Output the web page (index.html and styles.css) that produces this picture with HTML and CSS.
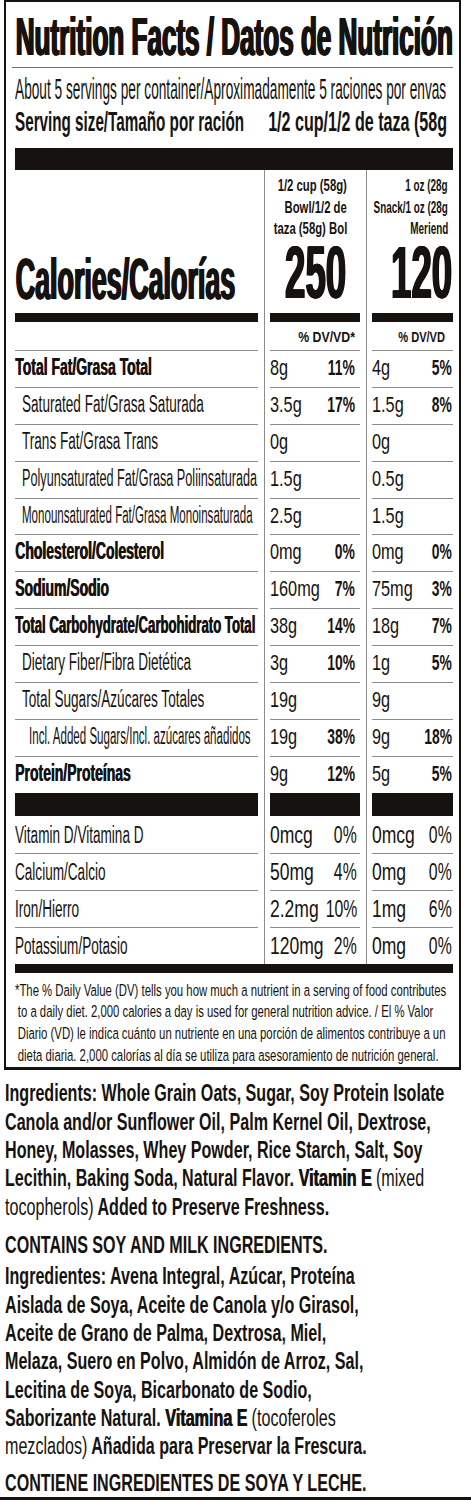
FILE: index.html
```html
<!DOCTYPE html>
<html lang="en">
<head>
    <meta charset="UTF-8">
    <meta name="viewport" content="width=device-width, initial-scale=1.0">
    <title>Nutrition Facts / Datos de Nutrición</title>
    <link rel="stylesheet" href="styles.css">
</head>
<body>
	<div class="label">
		<h1 class="title"><span class="sq heavy">Nutrition Facts / Datos de Nutrición</span></h1>
		<div class="per"><span class="sq">About 5 servings per container/Aproximadamente 5 raciones por envas</span></div>
		<div class="size">
			<span class="sq">Serving size/Tamaño por ración</span>
			<span class="end"><span class="sq">1/2 cup/1/2 de taza (58g</span></span>
		</div>
		<div class="bar-top"></div>

		<div class="facts">
			<div class="cal"><span class="sq heavy">Calories/Calorías</span></div>
			<div class="serv serv-a">
				<div class="end"><span class="sq">1/2 cup (58g)</span></div>
				<div class="end"><span class="sq">Bowl/1/2 de</span></div>
				<div class="end"><span class="sq">taza (58g) Bol</span></div>
				<div class="end big"><span class="sq heavy">250</span></div>
			</div>
			<div class="serv serv-b">
				<div class="end"><span class="sq">1 oz (28g</span></div>
				<div class="end"><span class="sq">Snack/1 oz (28g</span></div>
				<div class="end"><span class="sq">Meriend</span></div>
				<div class="end big"><span class="sq heavy">120</span></div>
			</div>

			<div class="bar"></div><div class="bar"></div><div class="bar"></div>

			<div class="dv"></div>
			<div class="dv end dv-a"><span class="sq">% DV/VD*</span></div>
			<div class="dv end dv-b"><span class="sq">% DV/VD</span></div>

			<!-- nutrients -->
			<div class="row nm main"><span class="sq">Total Fat/Grasa Total</span></div>
			<div class="row amt a"><span class="sq">8g</span><b class="pct"><span class="sq">11%</span></b></div>
			<div class="row amt b"><span class="sq">4g</span><b class="pct"><span class="sq">5%</span></b></div>

			<div class="row nm sub"><span class="sq">Saturated Fat/Grasa Saturada</span></div>
			<div class="row amt a"><span class="sq">3.5g</span><b class="pct"><span class="sq">17%</span></b></div>
			<div class="row amt b"><span class="sq">1.5g</span><b class="pct"><span class="sq">8%</span></b></div>

			<div class="row nm sub"><span class="sq">Trans Fat/Grasa Trans</span></div>
			<div class="row amt a"><span class="sq">0g</span></div>
			<div class="row amt b"><span class="sq">0g</span></div>

			<div class="row nm sub narrow"><span class="sq">Polyunsaturated Fat/Grasa Poliinsaturada</span></div>
			<div class="row amt a"><span class="sq">1.5g</span></div>
			<div class="row amt b"><span class="sq">0.5g</span></div>

			<div class="row nm sub narrower"><span class="sq">Monounsaturated Fat/Grasa Monoinsaturada</span></div>
			<div class="row amt a"><span class="sq">2.5g</span></div>
			<div class="row amt b"><span class="sq">1.5g</span></div>

			<div class="row nm main"><span class="sq">Cholesterol/Colesterol</span></div>
			<div class="row amt a"><span class="sq">0mg</span><b class="pct"><span class="sq">0%</span></b></div>
			<div class="row amt b"><span class="sq">0mg</span><b class="pct"><span class="sq">0%</span></b></div>

			<div class="row nm main"><span class="sq">Sodium/Sodio</span></div>
			<div class="row amt a"><span class="sq">160mg</span><b class="pct"><span class="sq">7%</span></b></div>
			<div class="row amt b"><span class="sq">75mg</span><b class="pct"><span class="sq">3%</span></b></div>

			<div class="row nm main narrow"><span class="sq">Total Carbohydrate/Carbohidrato Total</span></div>
			<div class="row amt a"><span class="sq">38g</span><b class="pct"><span class="sq">14%</span></b></div>
			<div class="row amt b"><span class="sq">18g</span><b class="pct"><span class="sq">7%</span></b></div>

			<div class="row nm sub"><span class="sq">Dietary Fiber/Fibra Dietética</span></div>
			<div class="row amt a"><span class="sq">3g</span><b class="pct"><span class="sq">10%</span></b></div>
			<div class="row amt b"><span class="sq">1g</span><b class="pct"><span class="sq">5%</span></b></div>

			<div class="row nm sub"><span class="sq">Total Sugars/Azúcares Totales</span></div>
			<div class="row amt a"><span class="sq">19g</span></div>
			<div class="row amt b"><span class="sq">9g</span></div>

			<div class="row nm sub2 narrower"><span class="sq">Incl. Added Sugars/Incl. azúcares añadidos</span></div>
			<div class="row amt a"><span class="sq">19g</span><b class="pct"><span class="sq">38%</span></b></div>
			<div class="row amt b"><span class="sq">9g</span><b class="pct"><span class="sq">18%</span></b></div>

			<div class="row nm main"><span class="sq">Protein/Proteínas</span></div>
			<div class="row amt a"><span class="sq">9g</span><b class="pct"><span class="sq">12%</span></b></div>
			<div class="row amt b"><span class="sq">5g</span><b class="pct"><span class="sq">5%</span></b></div>

			<div class="bar fat"></div><div class="bar fat"></div><div class="bar fat"></div>

			<!-- vitamins and minerals -->
			<div class="vrow first nm"><span class="sq">Vitamin D/Vitamina D</span></div>
			<div class="vrow first amt a"><span class="sq">0mcg</span><span class="pct"><span class="sq">0%</span></span></div>
			<div class="vrow first amt b"><span class="sq">0mcg</span><span class="pct"><span class="sq">0%</span></span></div>

			<div class="vrow nm"><span class="sq">Calcium/Calcio</span></div>
			<div class="vrow amt a"><span class="sq">50mg</span><span class="pct"><span class="sq">4%</span></span></div>
			<div class="vrow amt b"><span class="sq">0mg</span><span class="pct"><span class="sq">0%</span></span></div>

			<div class="vrow nm"><span class="sq">Iron/Hierro</span></div>
			<div class="vrow amt a"><span class="sq">2.2mg</span><span class="pct"><span class="sq">10%</span></span></div>
			<div class="vrow amt b"><span class="sq">1mg</span><span class="pct"><span class="sq">6%</span></span></div>

			<div class="vrow nm"><span class="sq">Potassium/Potasio</span></div>
			<div class="vrow amt a"><span class="sq">120mg</span><span class="pct"><span class="sq">2%</span></span></div>
			<div class="vrow amt b"><span class="sq">0mg</span><span class="pct"><span class="sq">0%</span></span></div>
		</div>

		<div class="bar-end"></div>
		<div class="fine">
			<p class="sq">*The % Daily Value (DV) tells you how much a nutrient in a serving of food contributes<br>
			to a daily diet. 2,000 calories a day is used for general nutrition advice. / El % Valor<br>
			Diario (VD) le indica cuánto un nutriente en una porción de alimentos contribuye a un<br>
			dieta diaria. 2,000 calorías al día se utiliza para asesoramiento de nutrición general.</p>
		</div>
	</div>

	<div class="ingr">
		<p class="sq">Ingredients: Whole Grain Oats, Sugar, Soy Protein Isolate<br>
		Canola and/or Sunflower Oil, Palm Kernel Oil, Dextrose,<br>
		Honey, Molasses, Whey Powder, Rice Starch, Salt, Soy<br>
		Lecithin, Baking Soda, Natural Flavor. <span class="black">Vitamin E</span> <span class="light">(mixed<br>
		tocopherols)</span> Added to Preserve Freshness.</p>
		<p class="sq allergen">CONTAINS SOY AND MILK INGREDIENTS.</p>
		<p class="sq es">Ingredientes: Avena Integral, Azúcar, Proteína<br>
		Aislada de Soya, Aceite de Canola y/o Girasol,<br>
		Aceite de Grano de Palma, Dextrosa, Miel,<br>
		Melaza, Suero en Polvo, Almidón de Arroz, Sal,<br>
		Lecitina de Soya, Bicarbonato de Sodio,<br>
		Saborizante Natural. <span class="black">Vitamina E</span> <span class="light">(tocoferoles<br>
		mezclados)</span> Añadida para Preservar la Frescura.</p>
		<p class="sq allergen-es">CONTIENE INGREDIENTES DE SOYA Y LECHE.</p>
	</div>
	<div class="cut"></div>
</body>
</html>
```

FILE: styles.css
```css
body {
    margin: 0;
    background: #fff;
    color: #161210;
    font-family: "Liberation Sans", Arial, sans-serif;
}

/* condensed type: the label face is far narrower than anything installed */
.sq {
    display: inline-block;
    white-space: nowrap;
    transform: scaleX(var(--k, .55));
    transform-origin: 0 50%;
}
.end {
    display: flex;
    justify-content: flex-end;
}
.end .sq {
    transform-origin: 100% 50%;
}
.heavy {
    text-shadow: 1px 0, 2px 0, 3px 0;
}

/* label box */
.label {
    width: 457px;
    margin-left: 4px;
    box-sizing: border-box;
    border: 2px solid #161210;
    border-bottom-width: 3px;
    padding: 4.5px 6px 0 9px;
    overflow: hidden;
}
.title {
    margin: 0 0 0 -3px;
    padding-left: 3px;
    font-size: 53.5px;
    line-height: 60px;
    font-weight: 700;
    border-bottom: 1px solid #6e6e6e;
}
.title .sq { --k: .487; }

.per {
    margin-top: 6.8px;
    font-size: 29.3px;
    line-height: 30px;
}
.per .sq { --k: .467; }

.size {
    display: flex;
    margin-top: 2.7px;
    font-size: 27.9px;
    line-height: 30px;
    font-weight: 700;
}
.size > .sq {
    --k: .546;
    flex: none;
}
.size .end {
    flex: 1;
    min-width: 0;
    padding-right: 6px;
}
.size .end .sq { --k: .577; }

.bar-top {
    height: 22px;
    margin-top: 11px;
    background: #161210;
}

/* the table */
.facts {
    display: grid;
    grid-template-columns: 243px 90px 81px;
    column-gap: 12px;
    background:
        linear-gradient(#8c8c8c, #8c8c8c) 249px 0 / 1px 100% no-repeat,
        linear-gradient(#8c8c8c, #8c8c8c) 351px 0 / 1px 100% no-repeat;
}
.cal {
    height: 143px;
    box-sizing: border-box;
    display: flex;
    align-items: flex-end;
    padding-bottom: 4px;
    font-size: 57.3px;
    line-height: 60px;
    font-weight: 700;
}
.cal .sq { --k: .469; }

.serv {
    height: 143px;
    box-sizing: border-box;
    padding-top: 5.2px;
    font-size: 16.5px;
    line-height: 21.6px;
    font-weight: 700;
}
.serv-a { padding-right: 13px; }
.serv-a .sq { --k: .686; }
.serv-b { padding-right: 5px; }
.serv-b .sq { --k: .6; }
.serv .big {
    margin-top: 1px;
    font-size: 74px;
    line-height: 63px;
}
.serv .big .sq { --k: .495; }
.serv-a .big { margin-right: 2px; }
.serv-b .big { margin-right: -3px; }

.bar {
    height: 9px;
    background: #161210;
}
.bar.fat { height: 23px; }

.dv {
    padding-top: 2px;
    font-size: 15.4px;
    line-height: 26px;
    font-weight: 700;
}
.dv-a { padding-right: 5px; }
.dv-a .sq { --k: .8; }
.dv-b { padding-right: 8px; }
.dv-b .sq { --k: .72; }

.row {
    height: 36.9px;
    box-sizing: border-box;
    border-top: 1px solid #8c8c8c;
    padding-top: 1px;
    font-size: 24.7px;
    line-height: 30px;
}
.vrow {
    height: 37px;
    box-sizing: border-box;
    border-top: 1px solid #8c8c8c;
    padding-top: 3.3px;
    font-size: 24.7px;
    line-height: 30px;
}
.vrow.first { border-top-color: transparent; }

.nm .sq { --k: .55; }
.main { font-weight: 700; }
.main .sq {
    --k: .565;
    text-shadow: 1px 0;
}
.sub { padding-left: 7px; }
.sub2 { padding-left: 14px; }
.nm.narrow .sq { --k: .513; }
.main.narrow .sq { --k: .533; }
.nm.narrower .sq { --k: .468; }

.amt {
    display: flex;
}
.row.amt {
    font-size: 22px;
    line-height: 32px;
}
.amt > .sq {
    --k: .74;
    flex: none;
}
.vrow.amt > .sq { --k: .71; }
.pct {
    flex: 1;
    min-width: 0;
    display: flex;
    justify-content: flex-end;
}
.pct .sq {
    --k: .63;
    transform-origin: 100% 50%;
}
.vrow .pct .sq { --k: .64; }
.row.a { padding-right: 5px; }
.vrow.a { padding-right: 3px; }
.amt.b { padding-right: 1px; }

.bar-end {
    height: 9px;
    background: #161210;
}
.fine {
    padding: 7px 0 1px;
    font-size: 16.3px;
    line-height: 21.67px;
}
.fine p {
    --k: .697;
    display: block;
    width: max-content;
    margin: 0;
    padding-left: 4px;
    text-indent: -4px;
    transform-origin: 0 0;
}

/* ingredients below the label */
.ingr {
    margin: 9px 0 0 5px;
    font-size: 23.5px;
    line-height: 28.3px;
    font-weight: 700;
    overflow: hidden;
}
.ingr p {
    --k: .685;
    display: block;
    width: max-content;
    margin: 0;
    transform-origin: 0 0;
}
.ingr .allergen { margin-top: 10.2px; }
.ingr .es { margin-top: 3px; }
.ingr .allergen-es { margin-top: 8.4px; }
.light { font-weight: 400; }
.black { text-shadow: 1px 0; }

.cut {
    height: 3px;
    background: #161210;
}
```
